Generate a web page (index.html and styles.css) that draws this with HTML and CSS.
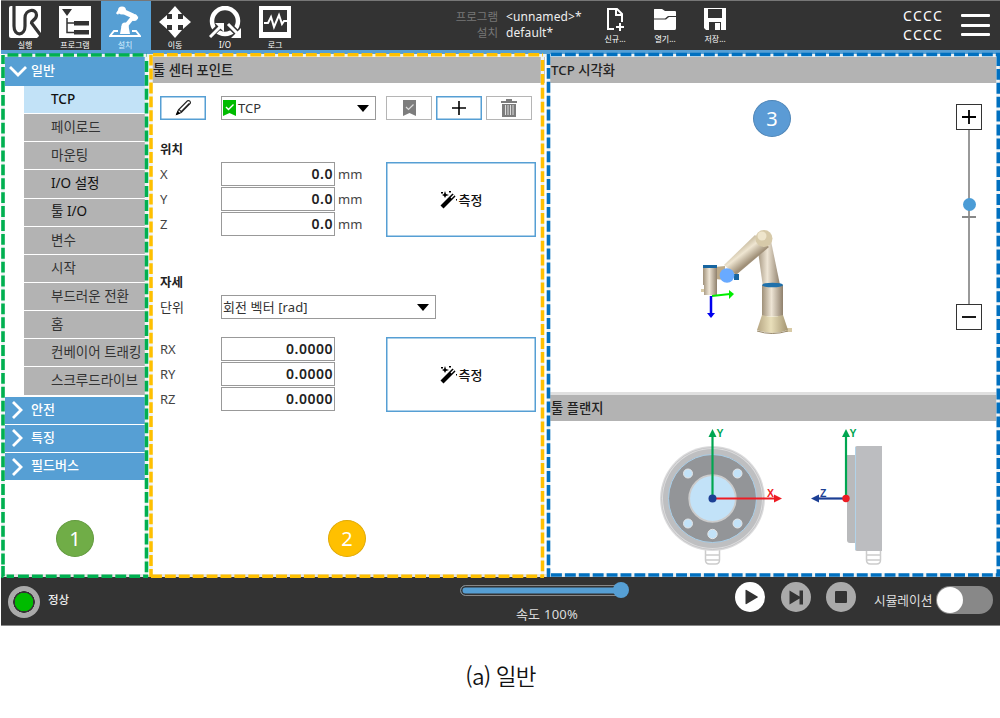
FILE: index.html
```html
<!DOCTYPE html>
<html lang="ko">
<head>
<meta charset="utf-8">
<title>일반</title>
<link rel="stylesheet" href="styles.css">
</head>
<body>
<figure class="figure">
<div class="screen">
  <header class="topbar">
    <nav class="tabs">
      <a class="tab"><svg width="32" height="32" viewBox="0 0 32 32"><path fill="#fff" d="M0 2q0-2 2-2h30v28l-4 4H2q-2 0-2-2z"/><path fill="none" stroke="#333" stroke-width="3.200" d="M5 0v20c0 11 11 10 11 0V12c0-9 11.500-10 11.500-3 0 5-5 5-5 8L33 31"/></svg><span>실행</span></a>
      <a class="tab"><svg width="32" height="32" viewBox="0 0 32 32"><path fill="#fff" d="M0 0h32v32H0z"/><path fill="#333" d="M3 3h10L8 10zM15 15h15v4.500H15zM15 24h15v4.500H15z"/><path fill="none" stroke="#333" stroke-width="1.5" d="M8 12v14.500h7M8 17h7"/></svg><span>프로그램</span></a>
      <a class="tab active"><svg width="32" height="32" viewBox="0 0 32 32"><g fill="none" stroke="#fff"><path stroke-width="5" d="M11 4l13 6"/><path stroke-width="4" d="M24 11l-8 10"/><path stroke-width="2.500" d="M25 11l4 1M10 5L8 8"/><path stroke-width="2" d="M9 25H5l-4 5h30l-4-5h-4"/></g><circle cx="13" cy="4.500" r="4" fill="#fff"/><circle cx="25" cy="11.500" r="3.500" fill="#fff"/><circle cx="16" cy="20" r="3.500" fill="#fff"/><path fill="#fff" d="M12.500 20h7l1.500 8H11z"/></svg><span>설치</span></a>
      <a class="tab"><svg width="32" height="32" viewBox="0 0 32 32"><path fill="#fff" d="M16 0l7 8h-4v5h5V9l8 7-8 7v-4h-5v5h4l-7 8-7-8h4v-5H8v4l-8-7 8-7v4h5V8H9z"/></svg><span>이동</span></a>
      <a class="tab"><svg width="32" height="32" viewBox="0 0 32 32"><circle cx="16" cy="15" r="13" fill="none" stroke="#fff" stroke-width="4.500"/><path stroke="#333" stroke-width="6" d="M1 30l12-12M19 18l12 12"/><path stroke="#fff" stroke-width="3" d="M1 31l10-10M19 18l10 10"/><path fill="#fff" d="M6 17h9v9zM32 22v10H22z"/></svg><span>I/O</span></a>
      <a class="tab"><svg width="32" height="32" viewBox="0 0 32 32"><path fill="#fff" d="M0 0h32v32H0z"/><path fill="#333" d="M4 4h24v22H4z"/><path fill="none" stroke="#fff" stroke-width="2" d="M5 17h4l3-6 3 10 5-12 3 9 2-3h3"/></svg><span>로그</span></a>
    </nav>
    <dl class="program"><dt>프로그램</dt><dd>&lt;unnamed&gt;*</dd><dt>설치</dt><dd>default*</dd></dl>
    <div class="files">
      <a class="file"><svg width="24" height="24" viewBox="0 0 24 24"><path fill="none" stroke="#fff" stroke-width="2" d="M11 22H5V2h9l5 5v8M13 2v6h6M17 16v8M13 20h8"/></svg><span>신규...</span></a>
      <a class="file"><svg width="24" height="24" viewBox="0 0 24 24"><path fill="#fff" d="M1 3c0-1 0-1 1-1h7l3 2h10q1 0 1 1v4h-8l-3 2.500H1z"/><path fill="#fff" d="M1 12.500h12l3-2.500h7v11c0 2-1 2-2 2H3c-2 0-2 0-2-2z"/></svg><span>열기...</span></a>
      <a class="file"><svg width="24" height="24" viewBox="0 0 24 24"><path fill="#fff" d="M1 1h22v22H3l-2-2z"/><path fill="#333" d="M5 2h14v9H5zM6 15h12v8H6z"/><path fill="#fff" d="M12 16h5v7h-5z"/></svg><span>저장...</span></a>
    </div>
    <div class="robot-id"><span>CCCC</span><span>CCCC</span></div>
    <div class="menu"><i></i><i></i><i></i></div>
  </header>
  <main class="main">
    <aside class="sidebar">
      <div class="group open"><svg width="18" height="12" viewBox="0 0 18 12"><path d="M1 2l8 8 8-8"/></svg>일반</div>
      <ul class="items">
        <li class="selected">TCP</li><li>페이로드</li><li>마운팅</li><li class="dark">I/O 설정</li><li class="dark">툴 I/O</li><li>변수</li><li>시작</li><li>부드러운 전환</li><li>홈</li><li>컨베이어 트래킹</li><li>스크루드라이브</li>
      </ul>
      <div class="group"><svg width="18" height="18" viewBox="0 0 18 18"><path d="M4 1l8 8-8 8"/></svg>안전</div>
      <div class="group"><svg width="18" height="18" viewBox="0 0 18 18"><path d="M4 1l8 8-8 8"/></svg>특징</div>
      <div class="group"><svg width="18" height="18" viewBox="0 0 18 18"><path d="M4 1l8 8-8 8"/></svg>필드버스</div>
      <span class="badge badge-green">1</span>
    </aside>
    <section class="center">
      <h2 class="band">툴 센터 포인트</h2>
      <div class="toolbar">
        <button class="btn edit"><svg width="18" height="18" viewBox="0 0 20 20"><path fill="none" stroke="#222" stroke-width="1.3" d="M3 17l2-5L15 2c2-1 4 1 3 3L8 15zM6 12l2 2L17 5"/><path d="M2 18l2-5 3 3z"/></svg></button>
        <div class="select tcp"><svg width="13" height="16" viewBox="0 0 13 16"><path fill="#0b0" d="M0 0h13v16l-6.500-3L0 16z"/><path fill="none" stroke="#fff" stroke-width="1.400" d="M3 7l2.500 2.500 5-5"/></svg><span>TCP</span><b class="caret"></b></div>
        <button class="btn off"><svg width="13" height="16" viewBox="0 0 13 16"><path fill="#7d7d7d" d="M0 0h13v16l-6.500-3L0 16z"/><path fill="none" stroke="#ddd" stroke-width="1.200" d="M3 7l2.500 2.500 5-5"/></svg></button>
        <button class="btn"><svg width="16" height="16" viewBox="0 0 16 16"><path stroke="#000" stroke-width="1.600" d="M1 8h14M8 1v14"/></svg></button>
        <button class="btn off"><svg width="18" height="20" viewBox="0 0 18 20"><path fill="#7d7d7d" d="M1 3h5V1h6v2h5v2H1zM2 6h14v13H2z"/><path stroke="#ddd" d="M5.500 7v10M8 7v10M10.500 7v10M13 7v10"/></svg></button>
      </div>
      <h3 class="sub">위치</h3>
      <div class="pose">
        <label>X</label><input class="num" value="0.0"><span>mm</span>
        <label>Y</label><input class="num" value="0.0"><span>mm</span>
        <label>Z</label><input class="num" value="0.0"><span>mm</span>
        <button class="measure"><svg width="18" height="18" viewBox="0 0 18 18"><path stroke="#000" stroke-width="4.200" d="M2 16L14 4"/><path stroke="#fff" stroke-width="1.200" d="M11 7l3-3"/><path d="M5 0l1 3 3 1-3 1-1 2-1-2-2-1 2-1zM1 1h2v1.500H1zM9 0h2v1.500H9zM16 8h1v1.500h-1z"/></svg>측정</button>
      </div>
      <h3 class="sub orient">자세</h3>
      <div class="units"><label>단위</label><div class="select rad"><span>회전 벡터 [rad]</span><b class="caret"></b></div></div>
      <div class="pose rotation">
        <label>RX</label><input class="num" value="0.0000"><span></span>
        <label>RY</label><input class="num" value="0.0000"><span></span>
        <label>RZ</label><input class="num" value="0.0000"><span></span>
        <button class="measure"><svg width="18" height="18" viewBox="0 0 18 18"><path stroke="#000" stroke-width="4.200" d="M2 16L14 4"/><path stroke="#fff" stroke-width="1.200" d="M11 7l3-3"/><path d="M5 0l1 3 3 1-3 1-1 2-1-2-2-1 2-1zM1 1h2v1.500H1zM9 0h2v1.500H9zM16 8h1v1.500h-1z"/></svg>측정</button>
      </div>
      <span class="badge badge-amber">2</span>
    </section>
    <section class="right">
      <h2 class="band">TCP 시각화</h2>
      <div class="view">
        <svg class="robot" width="140" height="140" viewBox="0 0 140 140">
          <defs>
            <linearGradient id="tube"><stop offset="0" stop-color="#9f9079"/><stop offset=".45" stop-color="#eee5d5"/><stop offset="1" stop-color="#8f806c"/></linearGradient>
            <linearGradient id="slant" gradientUnits="userSpaceOnUse" x1="58" y1="38" x2="69" y2="52"><stop offset="0" stop-color="#c8bb9f"/><stop offset=".4" stop-color="#efe6d2"/><stop offset="1" stop-color="#a09078"/></linearGradient>
            <linearGradient id="cone"><stop offset="0" stop-color="#b5a582"/><stop offset=".45" stop-color="#e9dfba"/><stop offset="1" stop-color="#a39470"/></linearGradient>
          </defs>
          <path fill="#d8caa6" d="M106 118h6v4h-6zM21 79h5v3h-5z"/>
          <path fill="url(#tube)" d="M77 34l14-3 9 44-17 2z"/>
          <path fill="url(#slant)" d="M75 25l14 12-33 28-12-10z"/>
          <circle cx="84" cy="28.500" r="8.500" fill="#d7caa9"/><circle cx="82" cy="26" r="4.500" fill="#eee5cc"/>
          <path fill="#bcaa89" d="M35 57l10-1v14l-10-1z"/><path fill="#1765a0" d="M54 64h5v6h-5z"/>
          <path fill="url(#tube)" d="M23 57h14v18H23zM24 74h13v11H24z"/><path fill="#1765a0" d="M23 55h14v3H23z"/>
          <circle cx="47" cy="65.500" r="7.300" fill="#69aaff"/>
          <path fill="url(#tube)" d="M82 75h21v31H82z"/><ellipse cx="92.500" cy="75" rx="10.500" ry="2.300" fill="#1f70ab"/>
          <path fill="url(#cone)" d="M82 105q10 3 21 0l5 15q-15 6-31 0z"/><path fill="none" stroke="#978769" d="M77 121q15 5 31 0"/>
          <path stroke="#0e0" stroke-width="2" d="M32 86l18-2"/><path fill="#0e0" d="M49 80l5 4-5 5z"/>
          <path stroke="#00e" stroke-width="2.500" d="M31 86v17"/><path fill="#00e" d="M27 103h8l-4 5z"/>
        </svg>
        <span class="badge badge-blue">3</span>
        <div class="zoom"><button><svg width="16" height="16" viewBox="0 0 16 16"><path d="M1 8h14M8 1v14"/></svg></button><div class="track"><i class="tick"></i><i class="dot"></i></div><button><svg width="16" height="16" viewBox="0 0 16 16"><path d="M1 8h14"/></svg></button></div>
      </div>
      <h2 class="band flange-title">툴 플랜지</h2>
      <div class="flange">
        <svg width="260" height="152" viewBox="640 421 260 152">
          <g fill="#fff" stroke="#ccc" stroke-width="1.500"><path d="M705.500 548h14v12q0 4-4 4h-6q-4 0-4-4zM705.500 555h14M705.500 560h14M866.500 548h14v12q0 4-4 4h-6q-4 0-4-4zM866.500 555h14M866.500 560h14"/></g>
          <circle cx="712.500" cy="498.500" r="52.500" fill="#dcdcdd"/><circle cx="712.500" cy="498.500" r="51" fill="none" stroke="#c6c6c8"/>
          <circle cx="712.500" cy="498.500" r="49.500" fill="#bebfc1"/><circle cx="712.500" cy="498.500" r="44" fill="#939598" stroke="#a9cfe9"/>
          <circle cx="712.500" cy="498.500" r="23.300" fill="#c2e2f8" stroke="#ccc" stroke-width="1.800"/>
          <g fill="#c2e2f8" stroke="#e4e5e6"><circle cx="688" cy="473.500" r="4.500"/><circle cx="737.500" cy="473.500" r="4.500"/><circle cx="688" cy="523.500" r="4.500"/><circle cx="737.500" cy="523.500" r="4.500"/><circle cx="712.500" cy="534" r="4.700"/></g>
          <path stroke="#ed1c24" stroke-width="2.200" d="M712 498.500h64"/><path fill="#ed1c24" d="M774 494.500l8 4-8 4z"/>
          <path stroke="#00a651" stroke-width="2.200" d="M712.500 498v-62"/><path fill="#00a651" d="M708.500 437l4-8 4 8z"/><circle cx="712.500" cy="498.500" r="4" fill="#1c3f94"/>
          <path fill="#b9babc" d="M847 455h9v88h-6q-3 0-3-3z"/><path fill="#bcbdc0" d="M855 448q0-2 2-2h25v105h-25q-2 0-2-2z"/><path stroke="#b1d3e9" d="M855.500 447v103"/>
          <path stroke="#1c3f94" stroke-width="2.200" d="M846 498.500h-29"/><path fill="#1c3f94" d="M819 494.500l-8 4 8 4z"/>
          <path stroke="#00a651" stroke-width="2.200" d="M846 498v-62"/><path fill="#00a651" d="M842 437l4-8 4 8z"/><circle cx="846" cy="498.500" r="3.700" fill="#ed1c24"/>
          <g class="axis"><text x="716.500" y="437" fill="#00a651">Y</text><text x="767" y="496.500" fill="#ed1c24">X</text><text x="849.500" y="437" fill="#00a651">Y</text><text x="820" y="496.500" fill="#1c3f94">Z</text></g>
        </svg>
      </div>
    </section>
  </main>
  <footer class="bottom">
    <i class="led"></i><span class="state">정상</span>
    <div class="speed"><div class="rail"><i></i></div><span>속도 100%</span></div>
    <div class="transport">
      <svg width="30" height="30" viewBox="0 0 30 30"><circle cx="15" cy="15" r="15" fill="#fff"/><path fill="#333" d="M10.500 8.500q0-1 1-.5l11 6.500q.8.500 0 1l-11 6.500q-1 .5-1-.5z"/></svg>
      <svg width="30" height="30" viewBox="0 0 30 30"><circle cx="15" cy="15" r="15" fill="#aaa"/><path fill="#333" d="M8.500 8.500l10 6V8.500H22v14h-3.500v-6l-10 6z"/></svg>
      <svg width="30" height="30" viewBox="0 0 30 30"><circle cx="15" cy="15" r="15" fill="#aaa"/><rect x="9" y="9" width="12" height="12" rx="1" fill="#333"/></svg>
    </div>
    <span class="sim">시뮬레이션</span><span class="toggle"><i></i></span>
  </footer>
  <svg class="marks" width="1000" height="578" viewBox="0 0 1000 578">
    <g fill="none" stroke="#eef2f3" stroke-width="3.500"><path d="M3 57v518M146.500 57v518M151 57v518M542.500 57v518M548.500 57v518M998 57v518"/><path stroke-width="3" d="M3 55.500h994M549 574.500h448"/></g>
    <g fill="none" stroke-width="3.600" stroke-dasharray="10.900 3">
      <path stroke="#00b050" d="M3 564.500V55M7.500 55H147M146.500 61v516M18 576.300h130M3 566v10.300h11"/>
      <path stroke="#ffc000" stroke-width="3.500" d="M151 54.700V577M153 54.700h390M542.500 60v517M151 576.300h393"/>
      <path stroke="#0070c0" d="M548.500 54V577M551 54.500h449M998.300 55v520M551 575h449"/>
    </g>
  </svg>
</div>
<figcaption class="caption">(a) 일반</figcaption>
</figure>
</body>
</html>
```
FILE: styles.css
```css
* { box-sizing: border-box; }
body { margin: 0; background: #fff; color: #333; font: 13px/1 "Noto Sans", "Noto Sans CJK KR", sans-serif; }
button { padding: 0; font: inherit; background: #fff; }
svg { display: block; flex: none; }
i { display: block; }
.figure { margin: 0; width: 1000px; height: 718px; overflow: hidden; }
.screen { position: relative; padding-left: 1px; height: 626px; }

.topbar { display: flex; height: 54px; background: #333; border-top: 1px solid #777; border-bottom: 4px solid #569fd4; color: #fff; }
.tabs { display: flex; width: 440px; }
.tab { width: 50px; height: 50px; padding: 5px 2px 0 0; display: flex; flex-direction: column; align-items: center; gap: 3px; font-size: 8px; }
.tab.active { background: #569fd4; color: #d8efff; }
.tab span { white-space: nowrap; }
.program { margin: 7.500px 0 0; width: 152px; display: grid; grid-template-columns: 57px 1fr; column-gap: 8px; grid-auto-rows: 16px; line-height: 16px; font-size: 12px; align-content: start; }
.program dt { text-align: right; color: #777; font-size: 11.500px; white-space: nowrap; }
.program dd { margin: 0; color: #eee; letter-spacing: .1px; }
.files { display: flex; padding-top: 6px; width: 310px; }
.file { width: 50px; margin-left: -3px; margin-right: 3px; display: flex; flex-direction: column; align-items: center; gap: 4px; font-size: 8px; }
.robot-id { padding-top: 5px; width: 58px; display: flex; flex-direction: column; font-size: 14px; line-height: 19px; letter-spacing: 1.400px; }
.menu { padding-top: 13px; width: 29px; display: flex; flex-direction: column; gap: 6.500px; }
.menu i { height: 3px; border-radius: 1px; background: #fff; }

.main { height: 523px; display: grid; grid-template-columns: 151px 398px 1fr; border-bottom: 3px solid #e6e6e6; }
.sidebar { position: relative; padding: 3px 7px 0 3px; }
.group { height: 27.200px; margin-bottom: 1px; margin-left: 1px; padding: 0 0 2px 4px; display: flex; align-items: center; gap: 4px; background: #569fd4; color: #fff; font-size: 13px; font-weight: 500; }
.group svg { transform: translateY(1px); }
.group path { fill: none; stroke: #fff; stroke-width: 2.800; }
.group.open { height: 28.500px; margin-bottom: .5px; }
.items { margin: 0 0 2px 20px; padding: 0; list-style: none; font-size: 13.500px; }
.items li { height: 27.150px; margin-bottom: 1px; padding: 0 0 0 27px; display: flex; align-items: center; white-space: nowrap; background: #b3b3b3; }
.items .selected { background: #c2e2f7; font-weight: 500; }
.items .selected, .items .dark { color: #111; }
.badge { position: absolute; width: 38px; height: 37px; border-radius: 50%; border: 1px solid; display: flex; align-items: center; justify-content: center; color: #fff; font-size: 20px; }
.badge-green { left: 55px; top: 466px; background: #70ad47; border-color: #649b40; }
.badge-amber { left: 176px; top: 466px; background: #ffc000; border-color: #e0aa08; }
.badge-blue { left: 203px; top: 17px; background: #5b9bd5; border-color: #5187b8; }

.band { margin: 3px 0 0; height: 26px; padding-left: 1px; line-height: 26px; font-size: 13.300px; font-weight: 500; color: #222; background: #b3b3b3; }
.center { position: relative; border-right: 5px solid #fff; }
.toolbar { display: flex; padding: 13px 0 0 8px; height: 57px; }
.btn { width: 46px; height: 24px; margin-right: 4px; display: flex; align-items: center; justify-content: center; border: 1px solid #569fd4; box-shadow: inset 0 0 0 .5px #569fd4; }
.btn.edit { margin-right: 15px; }
.btn.off { border-color: #b5b5b5; box-shadow: none; }
.select { display: flex; align-items: center; height: 24px; border: 1px solid #999; padding: 0 6px 0 1px; }
.tcp { width: 155px; margin-right: 10px; }
.tcp span { margin-left: 2px; }
.caret { margin-left: auto; border: 6px solid transparent; border-top: 7px solid #000; border-bottom: 0; }
.sub { margin: 0 0 0 8px; height: 22px; line-height: 20px; font-size: 12.500px; font-weight: 700; color: #222; }
.pose { display: grid; grid-template-columns: 61px 114px 51px 150px; grid-template-rows: repeat(3, 25px); padding-left: 8px; line-height: 24px; color: #444; }
.pose span { padding-left: 3px; font-size: 13px; letter-spacing: .2px; }
.pose label { font-size: 13px; }
.num { width: 114px; height: 24px; padding: 0 1px 1px; border: 1px solid #999; text-align: right; font: 600 14px "Noto Sans", sans-serif; letter-spacing: .5px; color: #222; }
.measure { grid-column: 4; grid-row: 1 / 4; height: 75px; display: flex; align-items: center; justify-content: center; gap: 1px; border: 1px solid #569fd4; box-shadow: inset 0 0 0 .5px #569fd4; color: #111; font-size: 13px; font-weight: 500; }
.orient { margin-top: 36px; }
.units { display: flex; height: 42px; padding-left: 8px; line-height: 24px; }
.units label { width: 61px; }
.rad { width: 215px; font-size: 13px; letter-spacing: .1px; }

.right { display: flex; flex-direction: column; }
.view { position: relative; height: 309px; display: flex; justify-content: flex-end; padding: 21px 18px 0 0; }
.robot { position: absolute; left: 130px; top: 127px; }
.zoom { width: 26px; height: 226px; display: flex; flex-direction: column; align-items: center; }
.zoom button { width: 26px; height: 26px; border: 1px solid #333; display: flex; align-items: center; justify-content: center; }
.zoom path { stroke: #000; stroke-width: 1.800; }
.track { position: relative; flex: 1; width: 2px; background: #999; }
.tick { position: absolute; left: -6px; top: 86px; width: 14px; height: 2px; background: #888; }
.dot { position: absolute; left: -5.500px; top: 68px; width: 13px; height: 13px; border-radius: 50%; background: #4b9cd6; }
.flange-title { margin: 0; border-top: 3px solid #e0e0e0; height: 29px; }
.flange { padding-left: 90px; }
.axis { font: 700 10.500px "Liberation Sans", sans-serif; }

.bottom { display: flex; height: 49px; background: #333; border-bottom: 1px solid #888; color: #eee; }
.led { width: 32px; height: 32px; margin: 9px 8px 0 7px; border-radius: 50%; background: radial-gradient(circle, #0b0 0 9px, #333 9.500px 10.500px, #aaa 11px); }
.state { width: 412px; padding-top: 17px; font-size: 11.500px; font-weight: 500; }
.speed { width: 174px; padding-top: 8px; display: flex; flex-direction: column; align-items: center; gap: 12px; font-size: 13px; }
.rail { position: relative; width: 162px; margin-right: 12px; height: 11px; border: 1px solid #888; border-radius: 6px; background: #569fd4; box-shadow: inset 0 0 0 1.500px #333; }
.rail i { position: absolute; left: 152px; top: -4px; width: 16px; height: 16px; border-radius: 50%; background: #569fd4; }
.speed span { letter-spacing: .25px; color: #ddd; }
.transport { display: flex; gap: 15.500px; padding-top: 5px; margin-left: 101px; }
.sim { width: 62px; margin: 16.500px 0 0 18px; font-size: 12.700px; color: #ddd; white-space: nowrap; }
.toggle { width: 57px; height: 28px; margin-top: 9px; border-radius: 14px; background: #888; padding: 1px; }
.toggle i { width: 26px; height: 26px; border-radius: 50%; background: #fff; }
.marks { position: absolute; left: 0; top: 0; }
.caption { padding-top: 35px; text-align: center; text-indent: 1px; font: 350 22.500px/28px "Noto Sans CJK KR", sans-serif; letter-spacing: -.8px; color: #111; }
```
